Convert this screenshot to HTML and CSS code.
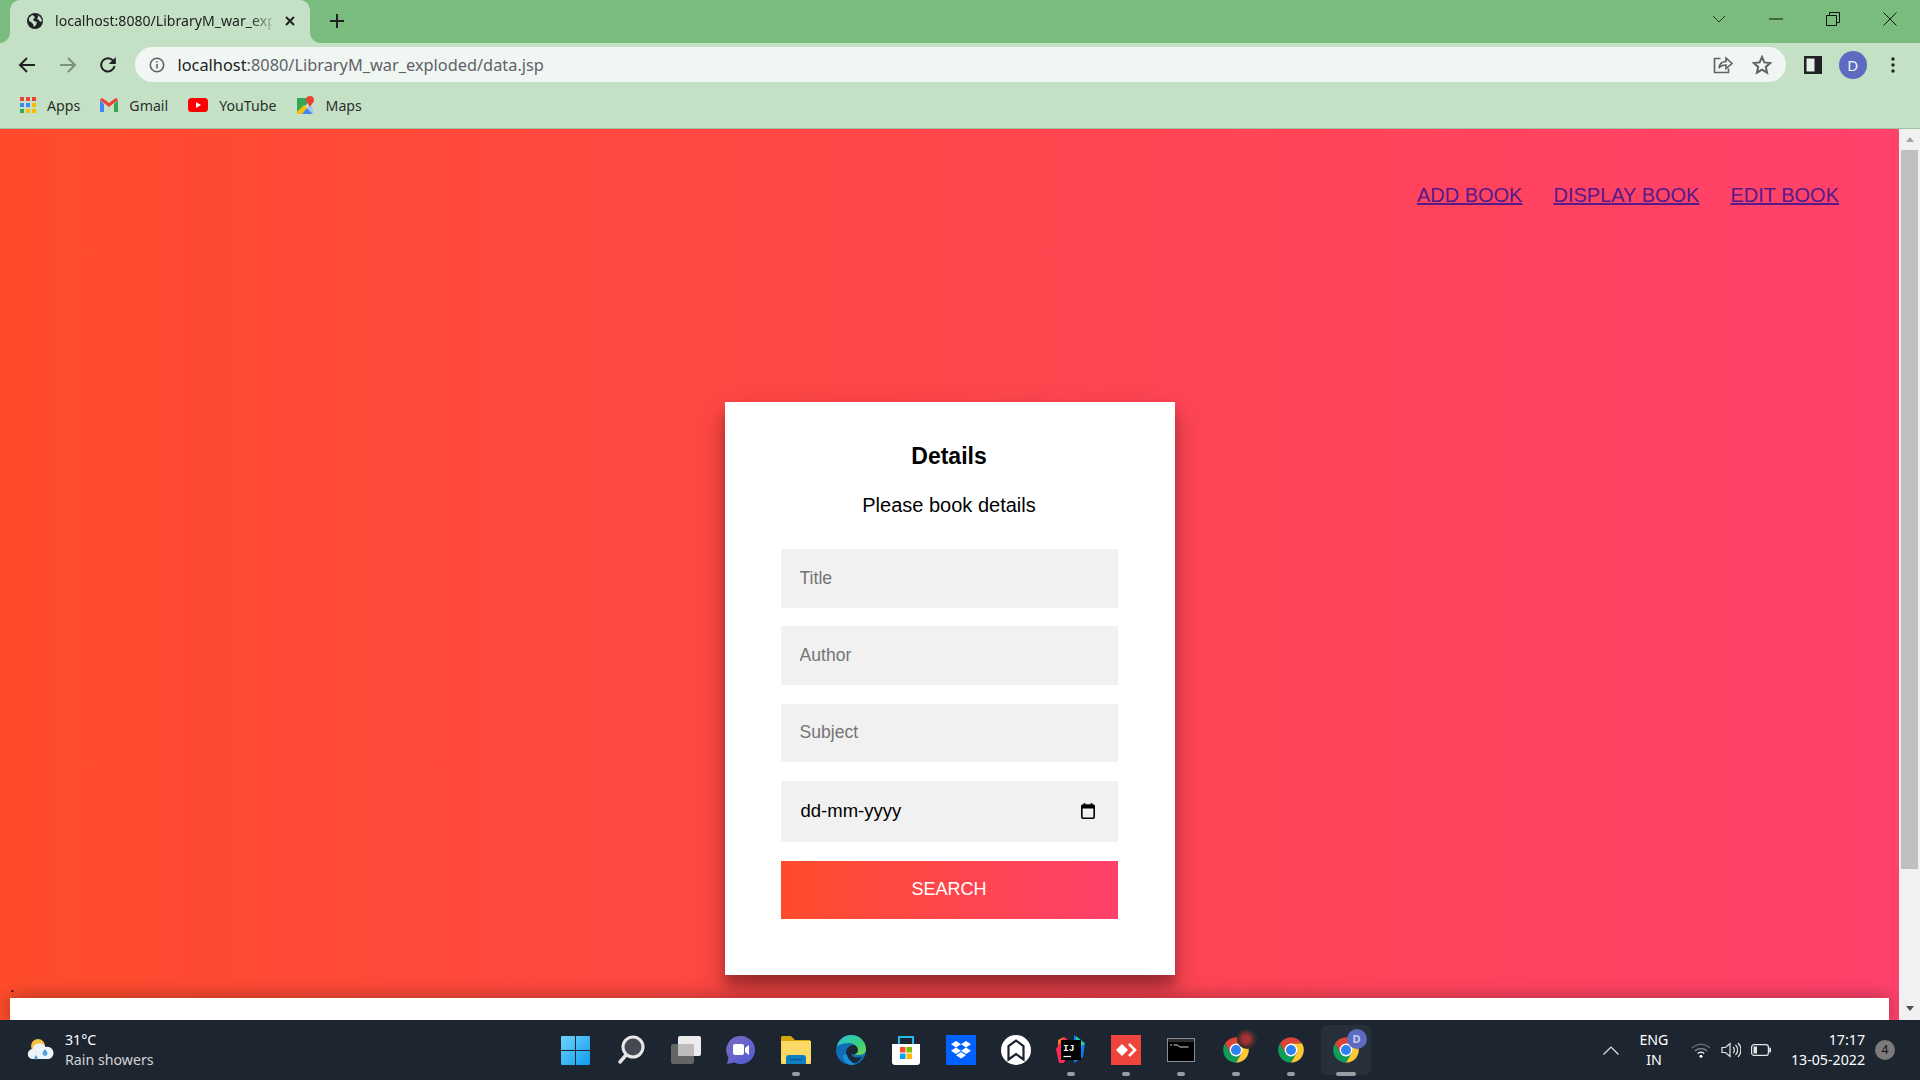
FILE: index.html
```html
<!DOCTYPE html>
<html lang="en">
<head>
<meta charset="utf-8">
<title>Details</title>
<link rel="stylesheet" href="styles.css">
</head>
<body>
<svg class="defs" width="0" height="0" aria-hidden="true">
  <symbol id="chrome" viewBox="0 0 48 48">
    <path fill="#db4437" d="M4.95 13A22 22 0 0 1 43.05 13L24 13 14.47 29.5Z"/>
    <path fill="#0f9d58" d="M4.95 13A22 22 0 0 0 24 46L33.53 29.5H14.47Z"/>
    <path fill="#fcc934" d="M43.05 13A22 22 0 0 1 24 46L33.53 29.5 24 13Z"/>
    <circle cx="24" cy="24" r="11" fill="#fff"/>
    <circle cx="24" cy="24" r="8.6" fill="#2f80f0"/>
  </symbol>
</svg>

<header class="chrome">
  <div class="tabstrip">
    <div class="tab">
      <svg class="tab-fav" viewBox="0 0 16 16" width="16" height="16"><circle cx="8" cy="8" r="8" fill="#202124"/><path fill="#c5e1c5" d="M2 5l3-3 2 1 1 2-2 1 1 2 3 1-1 3-2 2-1-3-2-2-2-1zM11 2l3 3 1 3-2 1-1-2-2-1 1-2z"/></svg>
      <span class="tab-title">localhost:8080/LibraryM_war_exp</span>
      <svg class="tab-x" viewBox="0 0 12 12" width="12" height="12"><path d="M2 2l8 8M10 2l-8 8" stroke="#202124" stroke-width="2"/></svg>
    </div>
    <svg class="newtab" viewBox="0 0 16 16" width="16" height="16"><path d="M8 1v14M1 8h14" stroke="#202124" stroke-width="2"/></svg>
    <div class="winbtns">
      <span class="win-cell"><svg viewBox="0 0 14 8" width="14" height="8"><path d="M1 1l6 6 6-6" fill="none" stroke="#2c3a2d" stroke-width="1"/></svg></span>
      <span class="win-cell"><svg viewBox="0 0 14 2" width="14" height="2"><path d="M0 1h14" stroke="#111" stroke-width="1"/></svg></span>
      <span class="win-cell"><svg viewBox="0 0 14 14" width="14" height="14"><path d="M.5 3.5h10v10H.5zM3.5 3V.5h10v10H11" fill="none" stroke="#111" stroke-width="1"/></svg></span>
      <span class="win-cell"><svg viewBox="0 0 14 14" width="14" height="14"><path d="M.5.5l13 13M13.5.5l-13 13" fill="none" stroke="#111" stroke-width="1"/></svg></span>
    </div>
  </div>
  <div class="toolbar">
    <span class="tool"><svg viewBox="0 0 18 18" width="18" height="18"><path d="M17 9H2.5M9 2L2 9l7 7" fill="none" stroke="#202124" stroke-width="2"/></svg></span>
    <span class="tool"><svg viewBox="0 0 18 18" width="18" height="18"><path d="M1 9h14.5M9 2l7 7-7 7" fill="none" stroke="#7d8f7e" stroke-width="2"/></svg></span>
    <span class="tool"><svg viewBox="0 0 18 18" width="18" height="18"><path d="M15.5 10a6.7 6.7 0 1 1-1.6-5.6L16 6.5" fill="none" stroke="#202124" stroke-width="2"/><path d="M16.8 1v7h-7z" fill="#202124"/></svg></span>
    <div class="omnibox">
      <svg class="info" viewBox="0 0 16 16" width="16" height="16"><circle cx="8" cy="8" r="6.7" fill="none" stroke="#5f6368" stroke-width="1.6"/><path d="M8 7v4.5M8 4.2v1.6" stroke="#5f6368" stroke-width="1.6"/></svg>
      <span class="url"><span class="url-host">localhost</span>:8080/LibraryM_war_exploded/data.jsp</span>
      <svg class="omni-share" viewBox="0 0 20 20" width="20" height="20"><path d="M7.5 3.5H1.500v14h14v-4M6 13c.5-4 3-6.500 7-6.500V3l6 5.500-6 5V10c-3 0-5.500.8-7 3z" fill="none" stroke="#5f6368" stroke-width="1.600"/></svg>
      <svg class="omni-star" viewBox="0 0 20 20" width="20" height="20"><path d="M10 2l2.400 5.400 5.800.6-4.400 3.900 1.300 5.800L10 14.700l-5.100 3 1.300-5.800L1.800 8l5.800-.6z" fill="none" stroke="#5f6368" stroke-width="2"/></svg>
    </div>
    <span class="tool tool-first"><svg viewBox="0 0 18 18" width="18" height="18"><rect width="18" height="18" fill="#202124"/><rect x="2.500" y="2.500" width="8" height="13" fill="#e7f1e7"/></svg></span>
    <span class="tool"><span class="avatar">D</span></span>
    <span class="tool"><svg viewBox="0 0 4 16" width="4" height="16"><circle cx="2" cy="2" r="1.700" fill="#202124"/><circle cx="2" cy="8" r="1.700" fill="#202124"/><circle cx="2" cy="14" r="1.700" fill="#202124"/></svg></span>
  </div>
  <nav class="bookmarks">
    <span class="bm">
      <svg viewBox="0 0 16 16" width="16" height="16"><g fill="#ea4335"><rect width="4" height="4"/><rect x="6" width="4" height="4"/><rect x="12" width="4" height="4"/></g><g fill="#4285f4"><rect y="6" width="4" height="4"/><rect x="6" y="6" width="4" height="4"/></g><rect x="12" y="6" width="4" height="4" fill="#fbbc04"/><rect y="12" width="4" height="4" fill="#34a853"/><rect x="6" y="12" width="4" height="4" fill="#fbbc04"/><rect x="12" y="12" width="4" height="4" fill="#fbbc04"/></svg>
      Apps</span>
    <span class="bm">
      <svg viewBox="0 0 18 14" width="18" height="14"><path fill="#4285f4" d="M0 2v12h4V6z"/><path fill="#34a853" d="M14 6v8h4V2z"/><path fill="#ea4335" d="M0 2a2 2 0 0 1 3-1.500L9 5l6-4.500A2 2 0 0 1 18 2l-9 7z"/></svg>
      Gmail</span>
    <span class="bm">
      <svg viewBox="0 0 20 14" width="20" height="14"><rect width="20" height="14" rx="3.500" fill="#f00"/><path d="M8 4l5 3-5 3z" fill="#fff"/></svg>
      YouTube</span>
    <span class="bm">
      <svg viewBox="0 0 18 18" width="18" height="18"><path fill="#34a853" d="M0 2h10v6L0 16z"/><path fill="#fbbc04" d="M0 16l7-7 3 3-5 6H0z"/><path fill="#4285f4" d="M5 18l5-6 6 6z"/><path fill="#a5c8f0" d="M10 12l3-3 3 3v6z"/><path fill="#ea4335" d="M13 0a4 4 0 0 1 4 4c0 2.500-2.500 4-4 7-1.500-3-4-4.500-4-7a4 4 0 0 1 4-4z"/></svg>
      Maps</span>
  </nav>
</header>

<main class="viewport">
  <div class="page">
    <nav class="topnav">
      <a class="topnav-link" href="#add">ADD BOOK</a>
      <a class="topnav-link" href="#display">DISPLAY BOOK</a>
      <a class="topnav-link" href="#edit">EDIT BOOK</a>
    </nav>
    <form class="card">
      <h1 class="card-title">Details</h1>
      <p class="card-sub">Please book details</p>
      <div class="fields">
        <input class="field" type="text" placeholder="Title">
        <input class="field" type="text" placeholder="Author">
        <input class="field" type="text" placeholder="Subject">
        <div class="field field-date">
          <span>dd-mm-yyyy</span>
          <svg viewBox="0 0 14 16" width="14" height="16"><path d="M3.500 0v2M10.500 0v2" stroke="#000" stroke-width="1.500"/><rect x=".8" y="2" width="12.400" height="13.200" rx="1.200" fill="none" stroke="#000" stroke-width="1.600"/><rect x="1" y="2" width="12" height="3.500" fill="#000"/></svg>
        </div>
        <button class="search" type="button">SEARCH</button>
      </div>
    </form>
    <div class="page-foot">
      <span class="dot">.</span>
      <div class="band"></div>
    </div>
  </div>
  <aside class="scrollbar">
    <span class="sb-up"></span>
    <span class="sb-thumb"></span>
    <span class="sb-down"></span>
  </aside>
</main>

<footer class="taskbar">
  <div class="weather">
    <svg viewBox="0 0 28 24" width="28" height="24"><circle cx="11" cy="8" r="7" fill="#f5c242"/><path fill="#eef3f8" d="M6 21a5 5 0 0 1-.5-10 7 7 0 0 1 13-2 6 6 0 0 1 3.500 12z"/><path fill="#4aa3e8" d="M18 11c1.500 2 2.500 3 2.500 4.500a2.500 2.500 0 0 1-5 0c0-1.500 1-2.500 2.500-4.500zM9 17c1 1.300 1.600 2 1.600 3a1.600 1.600 0 0 1-3.200 0c0-1 .6-1.700 1.600-3z"/></svg>
    <div class="weather-text"><span class="temp">31°C</span><span class="cond">Rain showers</span></div>
  </div>
  <div class="apps">
    <span class="app"><svg viewBox="0 0 29 29" width="29" height="29"><defs><linearGradient id="w" x1="0" y1="0" x2="1" y2="1"><stop offset="0" stop-color="#6fd4fb"/><stop offset="1" stop-color="#0f9bf0"/></linearGradient></defs><path fill="url(#w)" d="M1 0h13v14H0V1a1 1 0 0 1 1-1zM15 0h13a1 1 0 0 1 1 1v13H15zM0 15h14v14H1a1 1 0 0 1-1-1zM15 15h14v13a1 1 0 0 1-1 1H15z"/></svg></span>
    <span class="app"><svg viewBox="0 0 28 30" width="28" height="30"><circle cx="16" cy="12" r="10" fill="#454a52" stroke="#e8e8e8" stroke-width="3"/><path d="M9 20l-6 7" stroke="#e4e4e4" stroke-width="3.500" stroke-linecap="round"/></svg></span>
    <span class="app"><svg viewBox="0 0 30 28" width="30" height="28"><rect x="7" width="23" height="20" rx="2" fill="#ececec"/><rect y="8" width="23" height="20" rx="2" fill="#6a6a6a" fill-opacity=".92"/><rect x="7" y="8" width="16" height="12" fill="#bcbcbc"/></svg></span>
    <span class="app"><svg viewBox="0 0 30 30" width="30" height="30"><defs><linearGradient id="t" x1="0" y1="0" x2="1" y2="1"><stop offset="0" stop-color="#7e6bc4"/><stop offset="1" stop-color="#4f5bd5"/></linearGradient></defs><path fill="url(#t)" d="M15 1a14 14 0 1 1-6.500 26.400L1 29l1.500-6.500A14 14 0 0 1 15 1z"/><rect x="7" y="9" width="11" height="11" rx="2" fill="#fff"/><path fill="#fff" d="M19 13l4-3v10l-4-3z"/></svg></span>
    <span class="app"><svg viewBox="0 0 30 28" width="30" height="28"><path fill="#d9a40e" d="M1 0h9l4 4h15v8H0V1z"/><path fill="#fcd864" d="M0 5h30v22a1 1 0 0 1-1 1H1a1 1 0 0 1-1-1z"/><path fill="#0f7fc4" d="M5 28h20v-6a3 3 0 0 0-3-3H8a3 3 0 0 0-3 3z"/><path d="M9 23.500h12" stroke="#0a5a94" stroke-width="1.500"/></svg></span>
    <span class="app"><svg viewBox="0 0 30 30" width="30" height="30"><defs><linearGradient id="e1" x1="0" y1="0" x2="1" y2="1"><stop offset="0" stop-color="#2fc2e0"/><stop offset=".6" stop-color="#3ad07c"/><stop offset="1" stop-color="#7ad34d"/></linearGradient></defs><circle cx="15" cy="15" r="15" fill="#0e6fb8"/><path fill="url(#e1)" d="M1 11C3 4 9 0 15 0c9 0 15 7 15 14 0 5-4 6-8 6h-4c2-1 3-3 3-5 0-4-3-7-8-7-4.500 0-9 1-12 3z"/><path fill="#1c222c" d="M10 18c0-5 4-8 7-8s5 2.500 5 5-1.500 4-4 4.500c-2 .5-3-1-3-2 0 3 2 5 6 5 2 0 4-.5 5-1.500-2 5-6 7.500-10 7.500 3-2-6-4-6-10.500z" opacity=".95"/><path fill="#1a8fd6" d="M11 19c0 5 4 9 9 10-2 1-4 1-6 .7C9 28 7 24 7 20z"/></svg></span>
    <span class="app"><svg viewBox="0 0 30 30" width="30" height="30"><path fill="#fff" d="M1 9V27a3 3 0 0 0 3 3h22a3 3 0 0 0 3-3V9z"/><path fill="none" stroke="#2bb8ec" stroke-width="2" d="M8 9V2h14v7"/><rect x="9" y="12" width="5.500" height="5.500" fill="#f25022"/><rect x="15.500" y="12" width="5.500" height="5.500" fill="#7fba00"/><rect x="9" y="18.500" width="5.500" height="5.500" fill="#00a4ef"/><rect x="15.500" y="18.500" width="5.500" height="5.500" fill="#ffb900"/></svg></span>
    <span class="app"><svg viewBox="0 0 30 30" width="30" height="30"><rect width="30" height="30" fill="#0061fe"/><path fill="#fff" d="M10 6l5 3.200-5 3.200-5-3.200zM20 6l5 3.200-5 3.200-5-3.200zM10 12.600l5 3.200-5 3.200-5-3.200zM20 12.600l5 3.200-5 3.200-5-3.200zM10 20.200l5-3.200 5 3.200-5 3.200z"/></svg></span>
    <span class="app"><svg viewBox="0 0 30 30" width="30" height="30"><circle cx="15" cy="15" r="15" fill="#fff"/><path fill="none" stroke="#1c222c" stroke-width="2.200" d="M7.500 24.500V11L15 5.500 22.500 11v13.500L15 19z"/></svg></span>
    <span class="app"><svg viewBox="0 0 30 30" width="30" height="30"><path fill="#f97a12" d="M2 5l6-3 4 6-7 18-3-6z"/><path fill="#fe2857" d="M0 14l8-12 8 6-8 20H3z"/><path fill="#087cfa" d="M18 0l11 8-2 14-9 6z"/><path fill="#21d789" d="M20 1l9 8-8 4z"/><rect x="5" y="5" width="20" height="20" fill="#000"/><text class="ij" x="7" y="15.500">IJ</text><path d="M7.500 21.500h7.500" stroke="#fff" stroke-width="1.200"/></svg></span>
    <span class="app"><svg viewBox="0 0 30 30" width="30" height="30"><rect width="30" height="30" fill="#ef443b"/><path fill="#fff" d="M5 15l6-6 6 6-6 6z"/><path fill="none" stroke="#fff" stroke-width="2.500" d="M18 9l6 6-6 6"/></svg></span>
    <span class="app"><svg viewBox="0 0 28 24" width="28" height="24"><rect width="28" height="24" fill="#8b8d90"/><rect x="1" y="1" width="26" height="22" fill="#000"/><rect x="1" y="1" width="26" height="3" fill="#2b2d30"/><path d="M3 7h2M6.500 7h4l2 2h9" stroke="#d5d5d5" stroke-width="1"/></svg></span>
    <span class="app"><svg viewBox="0 0 48 48" width="28" height="28"><use href="#chrome"/></svg><span class="app-badge app-badge-photo"></span></span>
    <span class="app"><svg viewBox="0 0 48 48" width="28" height="28"><use href="#chrome"/></svg></span>
    <span class="app app-active"><svg viewBox="0 0 48 48" width="28" height="28"><use href="#chrome"/></svg><span class="app-badge app-badge-d">D</span></span>
  </div>
  <div class="tray">
    <svg class="tray-caret" viewBox="0 0 16 9" width="16" height="9"><path d="M.5 8.500L8 1l7.500 7.500" fill="none" stroke="#e6e6e6" stroke-width="1.200"/></svg>
    <div class="lang"><span>ENG</span><span>IN</span></div>
    <svg class="tray-wifi" viewBox="0 0 20 16" width="20" height="16"><path d="M1 6a13 13 0 0 1 18 0" fill="none" stroke="#6b7075" stroke-width="1.300"/><path d="M4 9a9 9 0 0 1 12 0" fill="none" stroke="#8a8e92" stroke-width="1.300"/><path d="M6.800 11.500a4.500 4.500 0 0 1 6.400 0" fill="none" stroke="#fff" stroke-width="1.300"/><circle cx="10" cy="14.200" r="1.500" fill="#fff"/></svg>
    <svg class="tray-vol" viewBox="0 0 20 16" width="20" height="16"><path d="M1 5.500h3.500L9 1.500v13l-4.500-4H1z" fill="none" stroke="#e6e6e6" stroke-width="1.200"/><path d="M12 5a4 4 0 0 1 0 6M14.500 3a7 7 0 0 1 0 10M17 1a10 10 0 0 1 0 14" fill="none" stroke="#e6e6e6" stroke-width="1.200"/></svg>
    <svg class="tray-bat" viewBox="0 0 20 12" width="20" height="12"><rect x=".6" y=".6" width="16.800" height="10.800" rx="2.500" fill="none" stroke="#e6e6e6" stroke-width="1.200"/><rect x="2.500" y="2.500" width="3.500" height="7" fill="#e6e6e6"/><rect x="18.200" y="3.500" width="1.800" height="5" rx=".8" fill="#e6e6e6"/></svg>
    <div class="clock"><span>17:17</span><span>13-05-2022</span></div>
    <span class="notif">4</span>
  </div>
</footer>
</body>
</html>
```

FILE: styles.css
```css
* { box-sizing: border-box; }
html, body { height: 100%; }
body {
  margin: 0;
  width: 1920px;
  height: 1080px;
  overflow: hidden;
  display: flex;
  flex-direction: column;
  font-family: "Liberation Sans", Arial, sans-serif;
  background: #fff;
}
.defs { position: absolute; }

/* Browser chrome */
.chrome {
  height: 129px;
  flex: none;
  font-family: "Noto Sans", "Open Sans", sans-serif;
  background: #c5e1c5;
  border-bottom: 1px solid #a3bfa4;
  color: #202124;
}
.tabstrip {
  height: 43px;
  background: #7abc7e;
  display: flex;
  align-items: center;
  padding-left: 10px;
}
.tab {
  width: 300px;
  height: 43px;
  align-self: flex-end;
  background: #c5e1c5;
  border-radius: 10px 10px 0 0;
  display: flex;
  align-items: center;
  padding: 0 14px 2px 17px;
  position: relative;
}
.tab::before, .tab::after {
  content: "";
  position: absolute;
  bottom: 0;
  width: 10px;
  height: 10px;
}
.tab::before { left: -10px; background: radial-gradient(circle at 0 0, #7abc7e 9.500px, #c5e1c5 10px); }
.tab::after { right: -10px; background: radial-gradient(circle at 100% 0, #7abc7e 9.500px, #c5e1c5 10px); }
.tab-fav { flex: none; }
.tab-title {
  flex: 1;
  min-width: 0;
  margin: 0 12px;
  font-size: 14.100px;
  white-space: nowrap;
  -webkit-mask-image: linear-gradient(to right, #000 195px, transparent 222px);
  mask-image: linear-gradient(to right, #000 195px, transparent 222px);
}
.tab-x { flex: none; }
.newtab { margin: 0 0 2px 19px; }
.winbtns { margin-left: auto; display: flex; height: 38px; align-self: flex-start; padding-right: 2px; }
.win-cell { width: 57px; display: flex; align-items: center; justify-content: center; }

.toolbar {
  height: 43px;
  display: flex;
  align-items: center;
  padding: 0 6.500px 0 7px;
}
.tool { width: 40.500px; height: 34px; display: flex; align-items: center; justify-content: center; flex: none; }
.tool-first { margin-left: 7px; width: 40px; }
.omnibox {
  flex: 1;
  height: 35px;
  margin-left: 6px;
  border-radius: 18px;
  background: #f0f6f1;
  display: flex;
  align-items: center;
  padding: 0 14px 0 14px;
  font-size: 16.350px;
  color: #5f6368;
}
.url { margin-left: 13px; flex: 1; white-space: nowrap; }
.url-host { color: #202124; }
.omni-share { margin-right: 19px; }
.avatar {
  width: 28px;
  height: 28px;
  border-radius: 50%;
  background: #5c6bc0;
  color: #f2f3fb;
  font-size: 15px;
  display: flex;
  align-items: center;
  justify-content: center;
}
.bookmarks {
  height: 40px;
  display: flex;
  align-items: center;
  gap: 20px;
  padding: 0 0 2px 20px;
  font-size: 14.200px;
  color: #2b2f2c;
}
.bm { display: flex; align-items: center; gap: 11px; }

/* Page */
.viewport { height: 891px; flex: none; display: flex; }
.page {
  flex: 1;
  min-width: 0;
  display: flex;
  flex-direction: column;
  background: linear-gradient(to right, #ff4b2b, #ff416c);
}
.topnav {
  display: flex;
  justify-content: flex-end;
  gap: 31px;
  padding: 54.500px 60px 0 0;
  font-size: 20px;
  line-height: 22px;
}
.topnav-link { color: #551a8b; }
.card {
  flex: none;
  width: 450px;
  height: 573px;
  margin: 196.500px auto 0;
  padding: 41px 57px 0 56px;
  background: #fff;
  box-shadow: 0 14px 28px rgba(0,0,0,.25), 0 10px 10px rgba(0,0,0,.22);
  color: #000;
  text-align: center;
}
.card-title { margin: 0; font-size: 23px; line-height: 26px; font-weight: 700; }
.card-sub { margin: 24px 0 32px; font-size: 20px; line-height: 24px; }
.fields { display: flex; flex-direction: column; gap: 18.600px; }
.field {
  display: block;
  width: 100%;
  height: 58.700px;
  border: 0;
  outline: 0;
  padding: 0 19px;
  background: #f1f1f1;
  font: 17.600px "Liberation Sans", Arial, sans-serif;
}
.field-date {
  height: 61.200px;
  display: flex;
  align-items: center;
  justify-content: space-between;
  padding: 0 23px 0 20px;
  font-size: 18.500px;
  color: #000;
}
.search {
  height: 58.400px;
  border: 0;
  padding: 0;
  color: #fff;
  font: 18px "Liberation Sans", Arial, sans-serif;
  background: linear-gradient(to right, #ff4b2b, #ff416c);
}
.page-foot { margin-top: auto; display: flex; flex-direction: column; }
.dot { padding-left: 10px; font-size: 16px; line-height: 2px; color: #000; height: 12px; }
.band {
  height: 22px;
  margin: 0 10px;
  background: #fff;
  box-shadow: 0 0 20px rgba(0,0,0,.35);
}

.scrollbar {
  width: 21px;
  flex: none;
  background: #f1f1f1;
  display: flex;
  flex-direction: column;
  align-items: center;
}
.sb-up {
  margin-top: 8px;
  border: 4.500px solid transparent;
  border-top: 0;
  border-bottom: 5px solid #a3a3a3;
}
.sb-thumb { width: 17px; height: 719px; margin-top: 8px; background: #bfbfbf; }
.sb-down {
  margin-top: auto;
  margin-bottom: 9px;
  border: 4.500px solid transparent;
  border-bottom: 0;
  border-top: 5px solid #505050;
}

/* Taskbar */
.taskbar {
  flex: 1;
  display: flex;
  align-items: center;
  background: #1d2530;
  color: #fff;
  font-family: "Noto Sans", "Open Sans", sans-serif;
  font-size: 14.200px;
  position: relative;
}
.weather { width: 548px; flex: none; display: flex; align-items: center; padding-left: 27px; }
.weather-text { display: flex; flex-direction: column; margin-left: 10px; line-height: 20px; }
.cond { color: #d2d4d6; }
.apps { display: flex; align-items: center; }
.app {
  width: 55px;
  height: 50px;
  display: flex;
  align-items: center;
  justify-content: center;
  position: relative;
}
.app:nth-child(5)::after, .app:nth-child(n+10)::after {
  content: "";
  position: absolute;
  left: 23.500px;
  bottom: -1px;
  width: 8px;
  height: 4px;
  border-radius: 2px;
  background: #9a9da1;
}
.app-active { background: #272f3a; border-radius: 6px; width: 50px; margin-left: 2.500px; }
.app:nth-child(n+10).app-active::after { width: 20px; left: 15px; }
.app-badge {
  position: absolute;
  width: 20px;
  height: 20px;
  border-radius: 50%;
  top: 4px;
  right: 6px;
}
.app-badge-photo { background: radial-gradient(circle at 45% 50%, #a83232 0 22%, #2e2a2a 62%, #4a4040 100%); }
.app-badge-d {
  right: 4px;
  background: #5c6bc0;
  color: #c9cff0;
  font-size: 11px;
  font-weight: 700;
  text-align: center;
  line-height: 20px;
}
.ij { font: 700 9.500px "Liberation Mono", monospace; fill: #fff; }
.tray { margin-left: auto; display: flex; align-items: center; padding-right: 25px; }
.tray-caret { margin-right: 17px; }
.lang { display: flex; flex-direction: column; align-items: center; line-height: 20px; width: 36px; margin-right: 19px; }
.tray-wifi { margin-right: 10px; }
.tray-vol { margin-right: 10px; }
.clock { display: flex; flex-direction: column; align-items: flex-end; line-height: 20px; margin-left: 20px; }
.notif {
  width: 20px;
  height: 20px;
  margin-left: 10px;
  border-radius: 50%;
  background: #7b7b7b;
  color: #111;
  font-size: 12px;
  line-height: 20px;
  text-align: center;
}
```
